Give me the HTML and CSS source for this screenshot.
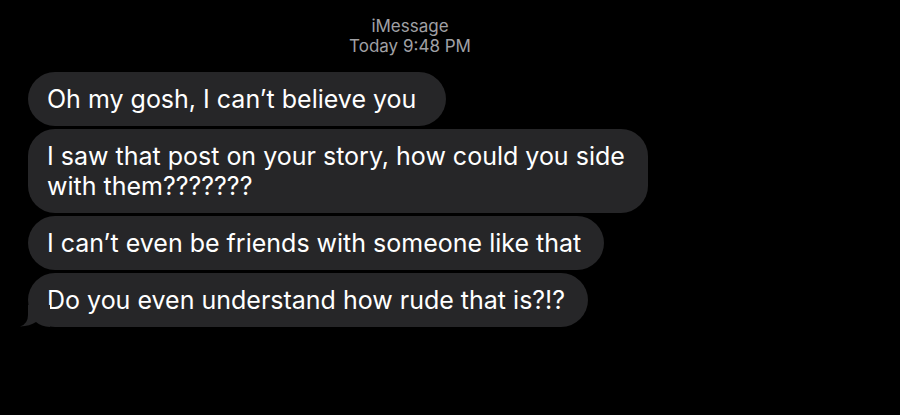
FILE: index.html
```html
<!DOCTYPE html>
<html>
<head>
<meta charset="utf-8">
<link rel="stylesheet" href="styles.css">
</head>
<body>
<div class="chat">
  <div class="header">
    <div class="service">iMessage</div>
    <div class="time">Today 9:48 PM</div>
  </div>
  <div class="messages">
    <div class="bubble wide">Oh my gosh, I can’t believe you</div>
    <div class="bubble">I saw that post on your story, how could you side<br>with them???????</div>
    <div class="bubble">I can’t even be friends with someone like that</div>
    <div class="bubble last">Do you even understand how rude that is?!?
      <svg class="tail" width="30" height="22" viewBox="0 0 30 22"><path d="M8 0 L8 10 Q8 19 0 21.5 Q10 21 16 17 Q21 21.5 30 22 L30 0 Z" fill="#262628"/></svg>
    </div>
  </div>
</div>
</body>
</html>
```
FILE: styles.css
```css
html, body {
  margin: 0;
  padding: 0;
  background: #000;
  width: 900px;
  height: 415px;
  overflow: hidden;
}
.chat {
  font-family: Inter, "Liberation Sans", sans-serif;
  color: #fff;
}
.header {
  width: 820px;
  text-align: center;
  padding-top: 16px;
  color: #a0a0a5;
  font-size: 17px;
  line-height: 20px;
}
.messages {
  display: flex;
  flex-direction: column;
  align-items: flex-start;
  gap: 3px;
  padding-left: 28px;
  margin-top: 16px;
}
.bubble {
  position: relative;
  background: #262628;
  border-radius: 27px;
  padding: 12px 23px 12px 19px;
  font-size: 25px;
  line-height: 30px;
  letter-spacing: 0;
}
.bubble.wide {
  padding-right: 30px;
}
.tail {
  position: absolute;
  left: -8px;
  bottom: 0;
}
```
